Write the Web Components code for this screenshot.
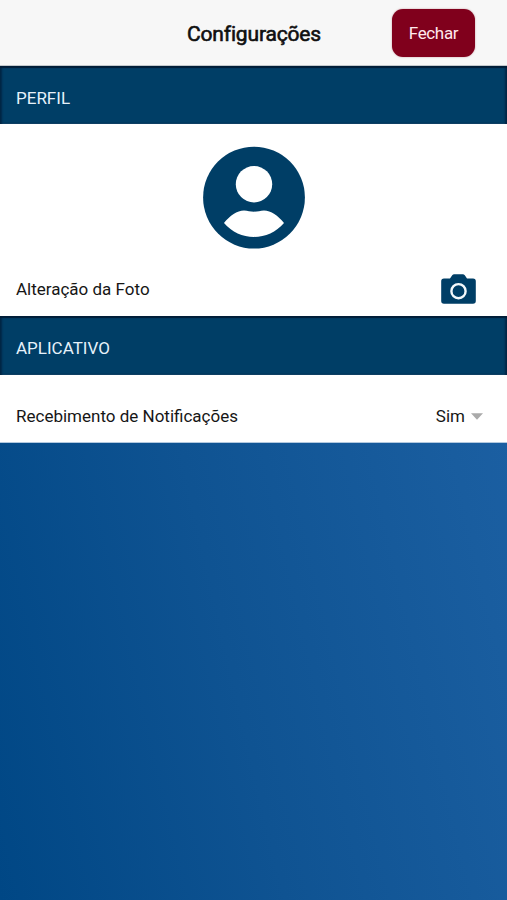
<!DOCTYPE html>
<html lang="pt-BR">
<head>
<meta charset="utf-8">
<title>Configurações</title>
<style>
html, body { margin: 0; height: 100%; }
body { font-family: Roboto, "Liberation Sans", sans-serif; color: #161616; overflow: hidden; }
</style>
</head>
<body>
<settings-page></settings-page>
<script>
const define = (name, html) => {
  const template = document.createElement('template');
  template.innerHTML = html;
  customElements.define(name, class extends HTMLElement {
    constructor() {
      super();
      this.attachShadow({ mode: 'open' }).append(template.content.cloneNode(true));
    }
  });
};

define('app-button', `
<style>
:host { display: block; }
button { display: block; width: 83px; height: 48px; padding: 1px 0 0; border: 0; border-radius: 11px;
  background: #80001c; color: #ffe9ec; font: 17px/47px Roboto, sans-serif; letter-spacing: -.35px; box-shadow: 0 0 2px #80001c66; }
</style>
<button type="button"><slot></slot></button>`);

define('app-header', `
<style>
:host { display: grid; grid-template-columns: 1fr auto 1fr; align-items: center; height: 66px;
  box-sizing: border-box; background: #f7f7f7; border-bottom: 1px solid #c3c8cc; }
h1 { grid-column: 2; margin: 0; padding: 2px 0 0 1px; font-size: 21px; line-height: 26px; font-weight: 400;
  letter-spacing: -.16px; -webkit-text-stroke: .6px #101010; color: #101010; }
.action { justify-self: end; margin-right: 32px; }
</style>
<h1><slot></slot></h1>
<div class="action"><slot name="action"></slot></div>`);

define('section-bar', `
<style>
:host { display: flex; align-items: center; height: var(--bar-height, 58px); box-sizing: border-box; padding: 5px 16px 0;
  background: #003e66; color: #e6f1fa; font-size: 17px; line-height: 20px;
  box-shadow: inset 0 2px 1px #001d38, inset 2px 0 2px #002747, inset -2px 0 2px #002747, inset 0 -1px 0 #1c567d; }
</style>
<slot></slot>`);

define('setting-row', `
<style>
:host { display: flex; justify-content: space-between; align-items: center; height: var(--row-height, 54px);
  box-sizing: border-box; padding: var(--row-padding, 0 31px 0 16px); font-size: 17px; line-height: 20px; }
</style>
<span><slot></slot></span><slot name="value"></slot>`);

define('user-avatar', `
<style>
:host { display: flex; justify-content: center; padding-top: 22px; height: 116px; box-sizing: content-box; }
svg { display: block; width: 102px; height: 103px; }
</style>
<svg viewBox="0 0 102 103" aria-hidden="true">
<circle cx="51" cy="51.6" r="50.9" fill="#003e66"/>
<circle cx="51" cy="38.2" r="18.2" fill="#fff"/>
<path transform="translate(0 .4)" d="M21 76.5C27 69 34 64 41 64C45 64 47 65.3 51 65.3S57 64 61 64C68 64 75 69 81 76.5C73 85.5 62.5 90.5 51 90.5S29 85.5 21 76.5Z" fill="#fff"/>
</svg>`);

define('camera-icon', `
<style>:host { display: block; } svg { display: block; width: 35px; height: 30px; }</style>
<svg viewBox="0 0 35 30" aria-hidden="true">
<path d="M3 4.5H9L11.2 1.2Q12 .2 13.2 .2H21.8Q23 .2 23.8 1.2L26 4.5H32Q34.8 4.5 34.8 7.3V27Q34.8 29.8 32 29.8H3Q.2 29.8 .2 27V7.3Q.2 4.5 3 4.5Z" fill="#003e66"/>
<circle cx="17.5" cy="17.2" r="7.1" fill="none" stroke="#f4f9fc" stroke-width="2.4"/>
</svg>`);

define('select-value', `
<style>:host { display: flex; align-items: center; gap: 6px; } svg { display: block; width: 12px; height: 7px; }</style>
<slot></slot><svg viewBox="0 0 12 7" aria-hidden="true"><path d="M0 .3H12L6 6.7Z" fill="#aaa"/></svg>`);

define('settings-page', `
<style>
:host { display: flex; flex-direction: column; height: 100vh;
  background: linear-gradient(77deg, #004785 0%, #0f5392 40%, #195d9f 78%, #1e62a7 100%); }
.panel { background: #fff; }
.profile { padding-top: 0; }
.app { --bar-height: 59px; padding-top: 4px; }
.last { border-bottom: 1px solid #b3c9df; --row-height: 67px; --row-padding: 15px 24px 0 16px; }
</style>
<app-header>Configurações<app-button slot="action">Fechar</app-button></app-header>
<section-bar>PERFIL</section-bar>
<div class="panel">
<user-avatar></user-avatar>
<setting-row>Alteração da Foto<camera-icon slot="value"></camera-icon></setting-row>
</div>
<section-bar class="app">APLICATIVO</section-bar>
<div class="panel last">
<setting-row>Recebimento de Notificações<select-value slot="value">Sim</select-value></setting-row>
</div>`);
</script>
</body>
</html>
